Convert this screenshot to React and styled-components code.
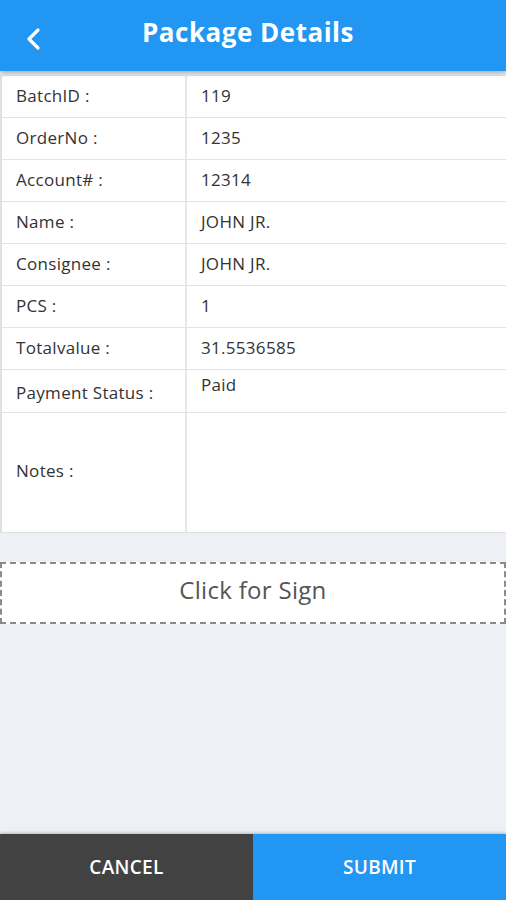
import React from 'react';
import styled, { createGlobalStyle } from 'styled-components';

const Global = createGlobalStyle`
  html, body {
    margin: 0;
    padding: 0;
    background: #edf0f5;
  }
  * { box-sizing: border-box; }
`;

const Screen = styled.div`
  width: 506px;
  height: 900px;
  display: flex;
  flex-direction: column;
  background: #edf0f5;
  font-family: "Open Sans", "Noto Sans", sans-serif;
  overflow: hidden;
`;

const Header = styled.header`
  height: 71px;
  flex-shrink: 0;
  background: #2196f3;
  display: flex;
  align-items: center;
  position: relative;
  z-index: 1;
  box-shadow: 0 2px 5px rgba(0, 0, 0, 0.3);
`;

const Back = styled.button`
  width: 70px;
  height: 71px;
  border: none;
  background: transparent;
  padding: 6px 0 0 25px;
  display: flex;
  align-items: center;
  cursor: pointer;
`;

const Title = styled.h1`
  flex: 1;
  margin: 0 0 8px 0;
  padding-right: 80px;
  text-align: center;
  color: #fff;
  font-size: 26px;
  font-weight: 700;
  letter-spacing: 0.5px;
`;

const Table = styled.div`
  margin-top: 4px;
  background: #fff;
  border-top: 1px solid #e3e3e3;
  border-left: 2px solid #e0e0e0;
  border-bottom: 1px solid #e0e0e0;
`;

const Row = styled.div`
  display: grid;
  grid-template-columns: 185px 1fr;
  height: ${p => p.$h || 42}px;
  border-bottom: ${p => (p.$last ? 'none' : '1px solid #e3e3e3')};
`;

const Label = styled.div`
  display: flex;
  align-items: center;
  padding: ${p => p.$pt || 0}px 0 ${p => p.$pb ?? 2}px 14px;
  font-size: 17px;
  letter-spacing: 0.3px;
  color: #333;
  border-right: 2px solid #e6e6e6;
`;

const Value = styled.div`
  display: flex;
  align-items: ${p => (p.$top ? 'flex-start' : 'center')};
  padding: ${p => (p.$top ? '3px' : '0')} 0 2px 14px;
  font-size: 17px;
  letter-spacing: 0.3px;
  color: #333;
`;

const Notes = styled.textarea`
  width: 100%;
  height: 100%;
  border: none;
  outline: none;
  resize: none;
  background: transparent;
  font-family: inherit;
  font-size: 17px;
`;

const SignBox = styled.div`
  margin-top: 29px;
  height: 62px;
  background: #fff;
  border: 2px dashed #8a8a8a;
  display: flex;
  align-items: center;
  justify-content: center;
  padding-bottom: 8px;
  font-size: 24px;
  letter-spacing: 0.3px;
  color: #555;
  cursor: pointer;
`;

const Spacer = styled.div`
  flex: 1;
`;

const Footer = styled.footer`
  height: 66px;
  display: grid;
  grid-template-columns: 253px 1fr;
  box-shadow: 0 -1px 3px rgba(0, 0, 0, 0.25);
`;

const FooterButton = styled.button`
  border: none;
  background: ${p => (p.$primary ? '#2196f3' : '#424242')};
  color: #fff;
  font-family: "Open Sans", sans-serif;
  font-size: 19px;
  font-weight: 600;
  letter-spacing: 0.3px;
  text-transform: uppercase;
  padding-bottom: 2px;
  cursor: pointer;
`;

const rows = [
  ['BatchID :', '119'],
  ['OrderNo :', '1235'],
  ['Account# :', '12314'],
  ['Name :', 'JOHN JR.'],
  ['Consignee :', 'JOHN JR.'],
  ['PCS :', '1'],
  ['Totalvalue :', '31.5536585'],
];

export default function App() {
  return (
    <Screen>
      <Global />
      <Header>
        <Back aria-label="back">
          <svg width="18" height="24" viewBox="0 0 18 24" fill="none">
            <polyline points="13,3 4,12 13,21" stroke="#fff" strokeWidth="3.2" strokeLinecap="round" strokeLinejoin="round" />
          </svg>
        </Back>
        <Title>Package Details</Title>
      </Header>
      <Table>
        {rows.map(([k, v]) => (
          <Row key={k}>
            <Label>{k}</Label>
            <Value>{v}</Value>
          </Row>
        ))}
        <Row $h={43}>
          <Label $pt={2} $pb={0}>Payment Status :</Label>
          <Value $top>Paid</Value>
        </Row>
        <Row $h={119} $last>
          <Label $pb={4}>Notes :</Label>
          <Value $top><Notes /></Value>
        </Row>
      </Table>
      <SignBox>Click for Sign</SignBox>
      <Spacer />
      <Footer>
        <FooterButton>Cancel</FooterButton>
        <FooterButton $primary>Submit</FooterButton>
      </Footer>
    </Screen>
  );
}
